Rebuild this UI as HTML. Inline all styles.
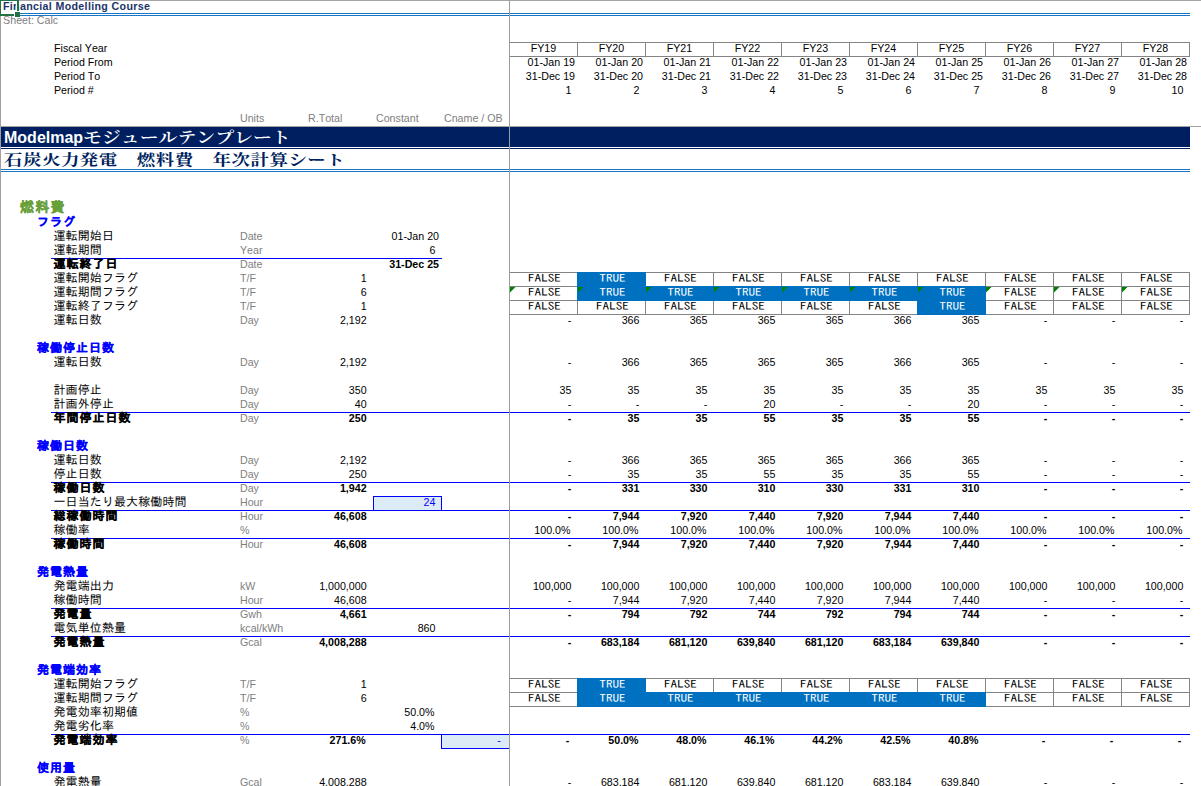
<!DOCTYPE html>
<html lang="ja">
<head>
<meta charset="utf-8">
<title>Calc</title>
<style>
html,body{margin:0;padding:0;background:#fff;}
#s{position:relative;width:1201px;height:786px;overflow:hidden;background:#fff;font-family:"Liberation Sans","IPAGothic","Noto Sans CJK JP",sans-serif;font-size:10.67px;line-height:12px;color:#000;}
#s div{position:absolute;}
.t{white-space:nowrap;font-kerning:none;font-variant-ligatures:none;}
.b{font-weight:bold;}
.g{color:#808080;}
.j{font-family:"Liberation Sans","IPAGothic","Noto Sans CJK JP",sans-serif;font-size:12px;letter-spacing:0.1px;line-height:14px;}
.j.b{letter-spacing:1.0px;-webkit-text-stroke:0.12px #000;}
.hd{color:#0000ff;font-weight:bold;letter-spacing:1px;-webkit-text-stroke:0.15px #0000ff;}
.sec{color:#68a03a;-webkit-text-stroke:0.2px #68a03a;font-weight:bold;font-size:14px;letter-spacing:1.3px;line-height:16px;}
.tf{font-family:"IPAGothic","Noto Sans CJK JP",sans-serif;font-size:10.8px;letter-spacing:0px;text-align:center;line-height:14px;transform:scaleX(1.22);transform-origin:50% 50%;}
.big{font-size:16px;line-height:20px;}
.mj{font-family:"Liberation Serif","Noto Serif CJK SC","Noto Serif CJK JP",serif;font-weight:700;display:inline-block;transform:scaleX(1.18);transform-origin:0 50%;}
</style>
</head>
<body>
<div id="s">
<div style="left:0px;top:0px;width:1201px;height:1px;background:#a6a6a6;"></div>
<div style="left:0px;top:0px;width:1px;height:786px;background:#a0a0a0;"></div>
<div style="left:509px;top:0px;width:1px;height:786px;background:#9b9b9b;"></div>
<div style="left:20px;top:13px;width:1170px;height:1px;background:#1b75c5;"></div>
<div style="left:20px;top:15px;width:1170px;height:1px;background:#1b75c5;"></div>
<div style="left:1px;top:127px;width:1189px;height:20px;background:#001f60;"></div>
<div style="left:1px;top:148px;width:1189px;height:1px;background:#001f60;"></div>
<div style="left:1px;top:169px;width:1189px;height:1px;background:#1b75c5;"></div>
<div style="left:1px;top:171px;width:1189px;height:1px;background:#1b75c5;"></div>
<div class="t b" style="top:0px;left:2.9px;color:#203468;letter-spacing:0.34px;">Financial Modelling Course</div>
<div class="t g" style="top:14px;left:3.1px;">Sheet: Calc</div>
<div style="left:16px;top:1px;width:1px;height:10px;background:#fff;"></div>
<div style="left:0px;top:0px;width:19px;height:1px;background:#217346;"></div>
<div style="left:0px;top:0px;width:1px;height:16px;background:#217346;"></div>
<div style="left:17px;top:0px;width:2px;height:11px;background:#217346;"></div>
<div style="left:0px;top:14px;width:14px;height:2px;background:#217346;"></div>
<div style="left:15px;top:12px;width:5px;height:5px;background:#217346;"></div>
<div class="t " style="top:42px;left:54.0px;">Fiscal Year</div>
<div class="t " style="top:56px;left:54.0px;">Period From</div>
<div class="t " style="top:70px;left:54.0px;">Period To</div>
<div class="t " style="top:84px;left:54.0px;">Period #</div>
<div class="t g" style="top:112px;left:240.0px;">Units</div>
<div class="t g" style="top:112px;left:308.0px;">R.Total</div>
<div class="t g" style="top:112px;left:376.0px;">Constant</div>
<div class="t g" style="top:112px;left:444.0px;">Cname / OB</div>
<div style="left:509px;top:42px;width:681px;height:1px;background:#848484;"></div>
<div style="left:509px;top:56px;width:681px;height:1px;background:#848484;"></div>
<div style="left:577px;top:42px;width:1px;height:15px;background:#848484;"></div>
<div style="left:645px;top:42px;width:1px;height:15px;background:#848484;"></div>
<div style="left:713px;top:42px;width:1px;height:15px;background:#848484;"></div>
<div style="left:781px;top:42px;width:1px;height:15px;background:#848484;"></div>
<div style="left:849px;top:42px;width:1px;height:15px;background:#848484;"></div>
<div style="left:917px;top:42px;width:1px;height:15px;background:#848484;"></div>
<div style="left:985px;top:42px;width:1px;height:15px;background:#848484;"></div>
<div style="left:1053px;top:42px;width:1px;height:15px;background:#848484;"></div>
<div style="left:1121px;top:42px;width:1px;height:15px;background:#848484;"></div>
<div style="left:1189px;top:42px;width:1px;height:15px;background:#848484;"></div>
<div class="t " style="top:42px;left:510px;width:67px;text-align:center;">FY19</div>
<div class="t " style="top:56px;right:626.0px;text-align:right;">01-Jan 19</div>
<div class="t " style="top:70px;right:626.0px;text-align:right;">31-Dec 19</div>
<div class="t " style="top:84px;right:629.6px;text-align:right;">1</div>
<div class="t " style="top:42px;left:578px;width:67px;text-align:center;">FY20</div>
<div class="t " style="top:56px;right:558.0px;text-align:right;">01-Jan 20</div>
<div class="t " style="top:70px;right:558.0px;text-align:right;">31-Dec 20</div>
<div class="t " style="top:84px;right:561.6px;text-align:right;">2</div>
<div class="t " style="top:42px;left:646px;width:67px;text-align:center;">FY21</div>
<div class="t " style="top:56px;right:490.0px;text-align:right;">01-Jan 21</div>
<div class="t " style="top:70px;right:490.0px;text-align:right;">31-Dec 21</div>
<div class="t " style="top:84px;right:493.6px;text-align:right;">3</div>
<div class="t " style="top:42px;left:714px;width:67px;text-align:center;">FY22</div>
<div class="t " style="top:56px;right:422.0px;text-align:right;">01-Jan 22</div>
<div class="t " style="top:70px;right:422.0px;text-align:right;">31-Dec 22</div>
<div class="t " style="top:84px;right:425.6px;text-align:right;">4</div>
<div class="t " style="top:42px;left:782px;width:67px;text-align:center;">FY23</div>
<div class="t " style="top:56px;right:354.0px;text-align:right;">01-Jan 23</div>
<div class="t " style="top:70px;right:354.0px;text-align:right;">31-Dec 23</div>
<div class="t " style="top:84px;right:357.6px;text-align:right;">5</div>
<div class="t " style="top:42px;left:850px;width:67px;text-align:center;">FY24</div>
<div class="t " style="top:56px;right:286.0px;text-align:right;">01-Jan 24</div>
<div class="t " style="top:70px;right:286.0px;text-align:right;">31-Dec 24</div>
<div class="t " style="top:84px;right:289.6px;text-align:right;">6</div>
<div class="t " style="top:42px;left:918px;width:67px;text-align:center;">FY25</div>
<div class="t " style="top:56px;right:218.0px;text-align:right;">01-Jan 25</div>
<div class="t " style="top:70px;right:218.0px;text-align:right;">31-Dec 25</div>
<div class="t " style="top:84px;right:221.6px;text-align:right;">7</div>
<div class="t " style="top:42px;left:986px;width:67px;text-align:center;">FY26</div>
<div class="t " style="top:56px;right:150.0px;text-align:right;">01-Jan 26</div>
<div class="t " style="top:70px;right:150.0px;text-align:right;">31-Dec 26</div>
<div class="t " style="top:84px;right:153.6px;text-align:right;">8</div>
<div class="t " style="top:42px;left:1054px;width:67px;text-align:center;">FY27</div>
<div class="t " style="top:56px;right:82.0px;text-align:right;">01-Jan 27</div>
<div class="t " style="top:70px;right:82.0px;text-align:right;">31-Dec 27</div>
<div class="t " style="top:84px;right:85.6px;text-align:right;">9</div>
<div class="t " style="top:42px;left:1122px;width:67px;text-align:center;">FY28</div>
<div class="t " style="top:56px;right:14.0px;text-align:right;">01-Jan 28</div>
<div class="t " style="top:70px;right:14.0px;text-align:right;">31-Dec 28</div>
<div class="t " style="top:84px;right:17.6px;text-align:right;">10</div>
<div class="t big" style="left:4px;top:128px;color:#fff;"><b>Modelmap</b><span class="mj" style="font-weight:600">モジュールテンプレート</span></div>
<div class="t big" style="left:4px;top:150px;color:#001f60;"><span class="mj" style="font-size:14.3px;letter-spacing:0.4px;transform:scaleX(1.29)">石炭火力発電　燃料費　年次計算シート</span></div>
<div class="t j sec" style="left:20px;top:199px;">燃料費</div>
<div class="t j hd" style="left:37px;top:215px;">フラグ</div>
<div class="t j" style="left:53.5px;top:229px;">運転開始日</div>
<div class="t g" style="top:230px;left:240.0px;">Date</div>
<div class="t " style="top:230px;right:762.0px;text-align:right;">01-Jan 20</div>
<div class="t j" style="left:53.5px;top:243px;">運転期間</div>
<div class="t g" style="top:244px;left:240.0px;">Year</div>
<div class="t " style="top:244px;right:765.6px;text-align:right;">6</div>
<div style="left:51px;top:258px;width:391px;height:1px;background:#0000ff;"></div>
<div class="t j b" style="left:53.5px;top:257px;">運転終了日</div>
<div class="t g" style="top:258px;left:240.0px;">Date</div>
<div class="t  b" style="top:258px;right:762.0px;text-align:right;">31-Dec 25</div>
<div class="t j" style="left:53.5px;top:271px;">運転開始フラグ</div>
<div class="t g" style="top:272px;left:240.0px;">T/F</div>
<div class="t " style="top:272px;right:834.4px;text-align:right;">1</div>
<div class="t j" style="left:53.5px;top:285px;">運転期間フラグ</div>
<div class="t g" style="top:286px;left:240.0px;">T/F</div>
<div class="t " style="top:286px;right:834.4px;text-align:right;">6</div>
<div class="t j" style="left:53.5px;top:299px;">運転終了フラグ</div>
<div class="t g" style="top:300px;left:240.0px;">T/F</div>
<div class="t " style="top:300px;right:834.4px;text-align:right;">1</div>
<div style="left:509px;top:272px;width:681px;height:1px;background:#848484;"></div>
<div style="left:509px;top:286px;width:681px;height:1px;background:#848484;"></div>
<div style="left:509px;top:300px;width:681px;height:1px;background:#848484;"></div>
<div style="left:509px;top:314px;width:681px;height:1px;background:#848484;"></div>
<div style="left:577px;top:272px;width:1px;height:43px;background:#848484;"></div>
<div style="left:645px;top:272px;width:1px;height:43px;background:#848484;"></div>
<div style="left:713px;top:272px;width:1px;height:43px;background:#848484;"></div>
<div style="left:781px;top:272px;width:1px;height:43px;background:#848484;"></div>
<div style="left:849px;top:272px;width:1px;height:43px;background:#848484;"></div>
<div style="left:917px;top:272px;width:1px;height:43px;background:#848484;"></div>
<div style="left:985px;top:272px;width:1px;height:43px;background:#848484;"></div>
<div style="left:1053px;top:272px;width:1px;height:43px;background:#848484;"></div>
<div style="left:1121px;top:272px;width:1px;height:43px;background:#848484;"></div>
<div style="left:1189px;top:272px;width:1px;height:43px;background:#848484;"></div>
<div style="left:577px;top:272px;width:69px;height:15px;background:#0070c0;"></div>
<div style="left:577px;top:286px;width:69px;height:15px;background:#0070c0;"></div>
<div style="left:645px;top:286px;width:69px;height:15px;background:#0070c0;"></div>
<div style="left:713px;top:286px;width:69px;height:15px;background:#0070c0;"></div>
<div style="left:781px;top:286px;width:69px;height:15px;background:#0070c0;"></div>
<div style="left:849px;top:286px;width:69px;height:15px;background:#0070c0;"></div>
<div style="left:917px;top:286px;width:69px;height:15px;background:#0070c0;"></div>
<div style="left:917px;top:300px;width:69px;height:15px;background:#0070c0;"></div>
<div class="t tf" style="left:511px;top:271px;width:67px;color:#000">FALSE</div>
<div class="t tf" style="left:579px;top:271px;width:67px;color:#fff">TRUE</div>
<div class="t tf" style="left:647px;top:271px;width:67px;color:#000">FALSE</div>
<div class="t tf" style="left:715px;top:271px;width:67px;color:#000">FALSE</div>
<div class="t tf" style="left:783px;top:271px;width:67px;color:#000">FALSE</div>
<div class="t tf" style="left:851px;top:271px;width:67px;color:#000">FALSE</div>
<div class="t tf" style="left:919px;top:271px;width:67px;color:#000">FALSE</div>
<div class="t tf" style="left:987px;top:271px;width:67px;color:#000">FALSE</div>
<div class="t tf" style="left:1055px;top:271px;width:67px;color:#000">FALSE</div>
<div class="t tf" style="left:1123px;top:271px;width:67px;color:#000">FALSE</div>
<div class="t tf" style="left:511px;top:285px;width:67px;color:#000">FALSE</div>
<svg style="position:absolute;left:510px;top:287px" width="6" height="6"><polygon points="0,0 5.5,0 0,5.5" fill="#008000"/></svg>
<div class="t tf" style="left:579px;top:285px;width:67px;color:#fff">TRUE</div>
<svg style="position:absolute;left:578px;top:287px" width="6" height="6"><polygon points="0,0 5.5,0 0,5.5" fill="#008000"/></svg>
<div class="t tf" style="left:647px;top:285px;width:67px;color:#fff">TRUE</div>
<svg style="position:absolute;left:646px;top:287px" width="6" height="6"><polygon points="0,0 5.5,0 0,5.5" fill="#008000"/></svg>
<div class="t tf" style="left:715px;top:285px;width:67px;color:#fff">TRUE</div>
<svg style="position:absolute;left:714px;top:287px" width="6" height="6"><polygon points="0,0 5.5,0 0,5.5" fill="#008000"/></svg>
<div class="t tf" style="left:783px;top:285px;width:67px;color:#fff">TRUE</div>
<svg style="position:absolute;left:782px;top:287px" width="6" height="6"><polygon points="0,0 5.5,0 0,5.5" fill="#008000"/></svg>
<div class="t tf" style="left:851px;top:285px;width:67px;color:#fff">TRUE</div>
<svg style="position:absolute;left:850px;top:287px" width="6" height="6"><polygon points="0,0 5.5,0 0,5.5" fill="#008000"/></svg>
<div class="t tf" style="left:919px;top:285px;width:67px;color:#fff">TRUE</div>
<svg style="position:absolute;left:918px;top:287px" width="6" height="6"><polygon points="0,0 5.5,0 0,5.5" fill="#008000"/></svg>
<div class="t tf" style="left:987px;top:285px;width:67px;color:#000">FALSE</div>
<svg style="position:absolute;left:986px;top:287px" width="6" height="6"><polygon points="0,0 5.5,0 0,5.5" fill="#008000"/></svg>
<div class="t tf" style="left:1055px;top:285px;width:67px;color:#000">FALSE</div>
<svg style="position:absolute;left:1054px;top:287px" width="6" height="6"><polygon points="0,0 5.5,0 0,5.5" fill="#008000"/></svg>
<div class="t tf" style="left:1123px;top:285px;width:67px;color:#000">FALSE</div>
<svg style="position:absolute;left:1122px;top:287px" width="6" height="6"><polygon points="0,0 5.5,0 0,5.5" fill="#008000"/></svg>
<div class="t tf" style="left:511px;top:299px;width:67px;color:#000">FALSE</div>
<div class="t tf" style="left:579px;top:299px;width:67px;color:#000">FALSE</div>
<div class="t tf" style="left:647px;top:299px;width:67px;color:#000">FALSE</div>
<div class="t tf" style="left:715px;top:299px;width:67px;color:#000">FALSE</div>
<div class="t tf" style="left:783px;top:299px;width:67px;color:#000">FALSE</div>
<div class="t tf" style="left:851px;top:299px;width:67px;color:#000">FALSE</div>
<div class="t tf" style="left:919px;top:299px;width:67px;color:#fff">TRUE</div>
<div class="t tf" style="left:987px;top:299px;width:67px;color:#000">FALSE</div>
<div class="t tf" style="left:1055px;top:299px;width:67px;color:#000">FALSE</div>
<div class="t tf" style="left:1123px;top:299px;width:67px;color:#000">FALSE</div>
<div class="t j" style="left:53.5px;top:313px;">運転日数</div>
<div class="t g" style="top:314px;left:240.0px;">Day</div>
<div class="t " style="top:314px;right:834.4px;text-align:right;">2,192</div>
<div class="t " style="top:314px;right:629.6px;text-align:right;">-</div>
<div class="t " style="top:314px;right:561.6px;text-align:right;">366</div>
<div class="t " style="top:314px;right:493.6px;text-align:right;">365</div>
<div class="t " style="top:314px;right:425.6px;text-align:right;">365</div>
<div class="t " style="top:314px;right:357.6px;text-align:right;">365</div>
<div class="t " style="top:314px;right:289.6px;text-align:right;">366</div>
<div class="t " style="top:314px;right:221.6px;text-align:right;">365</div>
<div class="t " style="top:314px;right:153.6px;text-align:right;">-</div>
<div class="t " style="top:314px;right:85.6px;text-align:right;">-</div>
<div class="t " style="top:314px;right:17.6px;text-align:right;">-</div>
<div class="t j hd" style="left:37px;top:341px;">稼働停止日数</div>
<div class="t j" style="left:53.5px;top:355px;">運転日数</div>
<div class="t g" style="top:356px;left:240.0px;">Day</div>
<div class="t " style="top:356px;right:834.4px;text-align:right;">2,192</div>
<div class="t " style="top:356px;right:629.6px;text-align:right;">-</div>
<div class="t " style="top:356px;right:561.6px;text-align:right;">366</div>
<div class="t " style="top:356px;right:493.6px;text-align:right;">365</div>
<div class="t " style="top:356px;right:425.6px;text-align:right;">365</div>
<div class="t " style="top:356px;right:357.6px;text-align:right;">365</div>
<div class="t " style="top:356px;right:289.6px;text-align:right;">366</div>
<div class="t " style="top:356px;right:221.6px;text-align:right;">365</div>
<div class="t " style="top:356px;right:153.6px;text-align:right;">-</div>
<div class="t " style="top:356px;right:85.6px;text-align:right;">-</div>
<div class="t " style="top:356px;right:17.6px;text-align:right;">-</div>
<div class="t j" style="left:53.5px;top:383px;">計画停止</div>
<div class="t g" style="top:384px;left:240.0px;">Day</div>
<div class="t " style="top:384px;right:834.4px;text-align:right;">350</div>
<div class="t " style="top:384px;right:629.6px;text-align:right;">35</div>
<div class="t " style="top:384px;right:561.6px;text-align:right;">35</div>
<div class="t " style="top:384px;right:493.6px;text-align:right;">35</div>
<div class="t " style="top:384px;right:425.6px;text-align:right;">35</div>
<div class="t " style="top:384px;right:357.6px;text-align:right;">35</div>
<div class="t " style="top:384px;right:289.6px;text-align:right;">35</div>
<div class="t " style="top:384px;right:221.6px;text-align:right;">35</div>
<div class="t " style="top:384px;right:153.6px;text-align:right;">35</div>
<div class="t " style="top:384px;right:85.6px;text-align:right;">35</div>
<div class="t " style="top:384px;right:17.6px;text-align:right;">35</div>
<div class="t j" style="left:53.5px;top:397px;">計画外停止</div>
<div class="t g" style="top:398px;left:240.0px;">Day</div>
<div class="t " style="top:398px;right:834.4px;text-align:right;">40</div>
<div class="t " style="top:398px;right:629.6px;text-align:right;">-</div>
<div class="t " style="top:398px;right:561.6px;text-align:right;">-</div>
<div class="t " style="top:398px;right:493.6px;text-align:right;">-</div>
<div class="t " style="top:398px;right:425.6px;text-align:right;">20</div>
<div class="t " style="top:398px;right:357.6px;text-align:right;">-</div>
<div class="t " style="top:398px;right:289.6px;text-align:right;">-</div>
<div class="t " style="top:398px;right:221.6px;text-align:right;">20</div>
<div class="t " style="top:398px;right:153.6px;text-align:right;">-</div>
<div class="t " style="top:398px;right:85.6px;text-align:right;">-</div>
<div class="t " style="top:398px;right:17.6px;text-align:right;">-</div>
<div style="left:51px;top:412px;width:1139px;height:1px;background:#0000ff;"></div>
<div class="t j b" style="left:53.5px;top:411px;">年間停止日数</div>
<div class="t g" style="top:412px;left:240.0px;">Day</div>
<div class="t  b" style="top:412px;right:834.4px;text-align:right;">250</div>
<div class="t  b" style="top:412px;right:629.6px;text-align:right;">-</div>
<div class="t  b" style="top:412px;right:561.6px;text-align:right;">35</div>
<div class="t  b" style="top:412px;right:493.6px;text-align:right;">35</div>
<div class="t  b" style="top:412px;right:425.6px;text-align:right;">55</div>
<div class="t  b" style="top:412px;right:357.6px;text-align:right;">35</div>
<div class="t  b" style="top:412px;right:289.6px;text-align:right;">35</div>
<div class="t  b" style="top:412px;right:221.6px;text-align:right;">55</div>
<div class="t  b" style="top:412px;right:153.6px;text-align:right;">-</div>
<div class="t  b" style="top:412px;right:85.6px;text-align:right;">-</div>
<div class="t  b" style="top:412px;right:17.6px;text-align:right;">-</div>
<div class="t j hd" style="left:37px;top:439px;">稼働日数</div>
<div class="t j" style="left:53.5px;top:453px;">運転日数</div>
<div class="t g" style="top:454px;left:240.0px;">Day</div>
<div class="t " style="top:454px;right:834.4px;text-align:right;">2,192</div>
<div class="t " style="top:454px;right:629.6px;text-align:right;">-</div>
<div class="t " style="top:454px;right:561.6px;text-align:right;">366</div>
<div class="t " style="top:454px;right:493.6px;text-align:right;">365</div>
<div class="t " style="top:454px;right:425.6px;text-align:right;">365</div>
<div class="t " style="top:454px;right:357.6px;text-align:right;">365</div>
<div class="t " style="top:454px;right:289.6px;text-align:right;">366</div>
<div class="t " style="top:454px;right:221.6px;text-align:right;">365</div>
<div class="t " style="top:454px;right:153.6px;text-align:right;">-</div>
<div class="t " style="top:454px;right:85.6px;text-align:right;">-</div>
<div class="t " style="top:454px;right:17.6px;text-align:right;">-</div>
<div class="t j" style="left:53.5px;top:467px;">停止日数</div>
<div class="t g" style="top:468px;left:240.0px;">Day</div>
<div class="t " style="top:468px;right:834.4px;text-align:right;">250</div>
<div class="t " style="top:468px;right:629.6px;text-align:right;">-</div>
<div class="t " style="top:468px;right:561.6px;text-align:right;">35</div>
<div class="t " style="top:468px;right:493.6px;text-align:right;">35</div>
<div class="t " style="top:468px;right:425.6px;text-align:right;">55</div>
<div class="t " style="top:468px;right:357.6px;text-align:right;">35</div>
<div class="t " style="top:468px;right:289.6px;text-align:right;">35</div>
<div class="t " style="top:468px;right:221.6px;text-align:right;">55</div>
<div class="t " style="top:468px;right:153.6px;text-align:right;">-</div>
<div class="t " style="top:468px;right:85.6px;text-align:right;">-</div>
<div class="t " style="top:468px;right:17.6px;text-align:right;">-</div>
<div style="left:51px;top:482px;width:1139px;height:1px;background:#0000ff;"></div>
<div class="t j b" style="left:53.5px;top:481px;">稼働日数</div>
<div class="t g" style="top:482px;left:240.0px;">Day</div>
<div class="t  b" style="top:482px;right:834.4px;text-align:right;">1,942</div>
<div class="t  b" style="top:482px;right:629.6px;text-align:right;">-</div>
<div class="t  b" style="top:482px;right:561.6px;text-align:right;">331</div>
<div class="t  b" style="top:482px;right:493.6px;text-align:right;">330</div>
<div class="t  b" style="top:482px;right:425.6px;text-align:right;">310</div>
<div class="t  b" style="top:482px;right:357.6px;text-align:right;">330</div>
<div class="t  b" style="top:482px;right:289.6px;text-align:right;">331</div>
<div class="t  b" style="top:482px;right:221.6px;text-align:right;">310</div>
<div class="t  b" style="top:482px;right:153.6px;text-align:right;">-</div>
<div class="t  b" style="top:482px;right:85.6px;text-align:right;">-</div>
<div class="t  b" style="top:482px;right:17.6px;text-align:right;">-</div>
<div style="left:373px;top:496px;width:69px;height:15px;background:#0000ff;"></div>
<div style="left:374px;top:497px;width:67px;height:13px;background:#ddebf7;"></div>
<div class="t j" style="left:53.5px;top:495px;">一日当たり最大稼働時間</div>
<div class="t g" style="top:496px;left:240.0px;">Hour</div>
<div class="t " style="top:496px;right:765.6px;text-align:right;color:#0000ff;">24</div>
<div style="left:51px;top:510px;width:1139px;height:1px;background:#0000ff;"></div>
<div class="t j b" style="left:53.5px;top:509px;">総稼働時間</div>
<div class="t g" style="top:510px;left:240.0px;">Hour</div>
<div class="t  b" style="top:510px;right:834.4px;text-align:right;">46,608</div>
<div class="t  b" style="top:510px;right:629.6px;text-align:right;">-</div>
<div class="t  b" style="top:510px;right:561.6px;text-align:right;">7,944</div>
<div class="t  b" style="top:510px;right:493.6px;text-align:right;">7,920</div>
<div class="t  b" style="top:510px;right:425.6px;text-align:right;">7,440</div>
<div class="t  b" style="top:510px;right:357.6px;text-align:right;">7,920</div>
<div class="t  b" style="top:510px;right:289.6px;text-align:right;">7,944</div>
<div class="t  b" style="top:510px;right:221.6px;text-align:right;">7,440</div>
<div class="t  b" style="top:510px;right:153.6px;text-align:right;">-</div>
<div class="t  b" style="top:510px;right:85.6px;text-align:right;">-</div>
<div class="t  b" style="top:510px;right:17.6px;text-align:right;">-</div>
<div class="t j" style="left:53.5px;top:523px;">稼働率</div>
<div class="t g" style="top:524px;left:240.0px;">%</div>
<div class="t " style="top:524px;right:630.5px;text-align:right;">100.0%</div>
<div class="t " style="top:524px;right:562.5px;text-align:right;">100.0%</div>
<div class="t " style="top:524px;right:494.5px;text-align:right;">100.0%</div>
<div class="t " style="top:524px;right:426.5px;text-align:right;">100.0%</div>
<div class="t " style="top:524px;right:358.5px;text-align:right;">100.0%</div>
<div class="t " style="top:524px;right:290.5px;text-align:right;">100.0%</div>
<div class="t " style="top:524px;right:222.5px;text-align:right;">100.0%</div>
<div class="t " style="top:524px;right:154.5px;text-align:right;">100.0%</div>
<div class="t " style="top:524px;right:86.5px;text-align:right;">100.0%</div>
<div class="t " style="top:524px;right:18.5px;text-align:right;">100.0%</div>
<div style="left:51px;top:538px;width:1139px;height:1px;background:#0000ff;"></div>
<div class="t j b" style="left:53.5px;top:537px;">稼働時間</div>
<div class="t g" style="top:538px;left:240.0px;">Hour</div>
<div class="t  b" style="top:538px;right:834.4px;text-align:right;">46,608</div>
<div class="t  b" style="top:538px;right:629.6px;text-align:right;">-</div>
<div class="t  b" style="top:538px;right:561.6px;text-align:right;">7,944</div>
<div class="t  b" style="top:538px;right:493.6px;text-align:right;">7,920</div>
<div class="t  b" style="top:538px;right:425.6px;text-align:right;">7,440</div>
<div class="t  b" style="top:538px;right:357.6px;text-align:right;">7,920</div>
<div class="t  b" style="top:538px;right:289.6px;text-align:right;">7,944</div>
<div class="t  b" style="top:538px;right:221.6px;text-align:right;">7,440</div>
<div class="t  b" style="top:538px;right:153.6px;text-align:right;">-</div>
<div class="t  b" style="top:538px;right:85.6px;text-align:right;">-</div>
<div class="t  b" style="top:538px;right:17.6px;text-align:right;">-</div>
<div class="t j hd" style="left:37px;top:565px;">発電熱量</div>
<div class="t j" style="left:53.5px;top:579px;">発電端出力</div>
<div class="t g" style="top:580px;left:240.0px;">kW</div>
<div class="t " style="top:580px;right:834.4px;text-align:right;">1,000,000</div>
<div class="t " style="top:580px;right:629.6px;text-align:right;">100,000</div>
<div class="t " style="top:580px;right:561.6px;text-align:right;">100,000</div>
<div class="t " style="top:580px;right:493.6px;text-align:right;">100,000</div>
<div class="t " style="top:580px;right:425.6px;text-align:right;">100,000</div>
<div class="t " style="top:580px;right:357.6px;text-align:right;">100,000</div>
<div class="t " style="top:580px;right:289.6px;text-align:right;">100,000</div>
<div class="t " style="top:580px;right:221.6px;text-align:right;">100,000</div>
<div class="t " style="top:580px;right:153.6px;text-align:right;">100,000</div>
<div class="t " style="top:580px;right:85.6px;text-align:right;">100,000</div>
<div class="t " style="top:580px;right:17.6px;text-align:right;">100,000</div>
<div class="t j" style="left:53.5px;top:593px;">稼働時間</div>
<div class="t g" style="top:594px;left:240.0px;">Hour</div>
<div class="t " style="top:594px;right:834.4px;text-align:right;">46,608</div>
<div class="t " style="top:594px;right:629.6px;text-align:right;">-</div>
<div class="t " style="top:594px;right:561.6px;text-align:right;">7,944</div>
<div class="t " style="top:594px;right:493.6px;text-align:right;">7,920</div>
<div class="t " style="top:594px;right:425.6px;text-align:right;">7,440</div>
<div class="t " style="top:594px;right:357.6px;text-align:right;">7,920</div>
<div class="t " style="top:594px;right:289.6px;text-align:right;">7,944</div>
<div class="t " style="top:594px;right:221.6px;text-align:right;">7,440</div>
<div class="t " style="top:594px;right:153.6px;text-align:right;">-</div>
<div class="t " style="top:594px;right:85.6px;text-align:right;">-</div>
<div class="t " style="top:594px;right:17.6px;text-align:right;">-</div>
<div style="left:51px;top:608px;width:1139px;height:1px;background:#0000ff;"></div>
<div class="t j b" style="left:53.5px;top:607px;">発電量</div>
<div class="t g" style="top:608px;left:240.0px;">Gwh</div>
<div class="t  b" style="top:608px;right:834.4px;text-align:right;">4,661</div>
<div class="t  b" style="top:608px;right:629.6px;text-align:right;">-</div>
<div class="t  b" style="top:608px;right:561.6px;text-align:right;">794</div>
<div class="t  b" style="top:608px;right:493.6px;text-align:right;">792</div>
<div class="t  b" style="top:608px;right:425.6px;text-align:right;">744</div>
<div class="t  b" style="top:608px;right:357.6px;text-align:right;">792</div>
<div class="t  b" style="top:608px;right:289.6px;text-align:right;">794</div>
<div class="t  b" style="top:608px;right:221.6px;text-align:right;">744</div>
<div class="t  b" style="top:608px;right:153.6px;text-align:right;">-</div>
<div class="t  b" style="top:608px;right:85.6px;text-align:right;">-</div>
<div class="t  b" style="top:608px;right:17.6px;text-align:right;">-</div>
<div class="t j" style="left:53.5px;top:621px;">電気単位熱量</div>
<div class="t g" style="top:622px;left:240.0px;">kcal/kWh</div>
<div class="t " style="top:622px;right:765.6px;text-align:right;">860</div>
<div style="left:51px;top:636px;width:1139px;height:1px;background:#0000ff;"></div>
<div class="t j b" style="left:53.5px;top:635px;">発電熱量</div>
<div class="t g" style="top:636px;left:240.0px;">Gcal</div>
<div class="t  b" style="top:636px;right:834.4px;text-align:right;">4,008,288</div>
<div class="t  b" style="top:636px;right:629.6px;text-align:right;">-</div>
<div class="t  b" style="top:636px;right:561.6px;text-align:right;">683,184</div>
<div class="t  b" style="top:636px;right:493.6px;text-align:right;">681,120</div>
<div class="t  b" style="top:636px;right:425.6px;text-align:right;">639,840</div>
<div class="t  b" style="top:636px;right:357.6px;text-align:right;">681,120</div>
<div class="t  b" style="top:636px;right:289.6px;text-align:right;">683,184</div>
<div class="t  b" style="top:636px;right:221.6px;text-align:right;">639,840</div>
<div class="t  b" style="top:636px;right:153.6px;text-align:right;">-</div>
<div class="t  b" style="top:636px;right:85.6px;text-align:right;">-</div>
<div class="t  b" style="top:636px;right:17.6px;text-align:right;">-</div>
<div class="t j hd" style="left:37px;top:663px;">発電端効率</div>
<div class="t j" style="left:53.5px;top:677px;">運転開始フラグ</div>
<div class="t g" style="top:678px;left:240.0px;">T/F</div>
<div class="t " style="top:678px;right:834.4px;text-align:right;">1</div>
<div class="t j" style="left:53.5px;top:691px;">運転期間フラグ</div>
<div class="t g" style="top:692px;left:240.0px;">T/F</div>
<div class="t " style="top:692px;right:834.4px;text-align:right;">6</div>
<div style="left:509px;top:678px;width:681px;height:1px;background:#848484;"></div>
<div style="left:509px;top:692px;width:681px;height:1px;background:#848484;"></div>
<div style="left:509px;top:706px;width:681px;height:1px;background:#848484;"></div>
<div style="left:577px;top:678px;width:1px;height:29px;background:#848484;"></div>
<div style="left:645px;top:678px;width:1px;height:29px;background:#848484;"></div>
<div style="left:713px;top:678px;width:1px;height:29px;background:#848484;"></div>
<div style="left:781px;top:678px;width:1px;height:29px;background:#848484;"></div>
<div style="left:849px;top:678px;width:1px;height:29px;background:#848484;"></div>
<div style="left:917px;top:678px;width:1px;height:29px;background:#848484;"></div>
<div style="left:985px;top:678px;width:1px;height:29px;background:#848484;"></div>
<div style="left:1053px;top:678px;width:1px;height:29px;background:#848484;"></div>
<div style="left:1121px;top:678px;width:1px;height:29px;background:#848484;"></div>
<div style="left:1189px;top:678px;width:1px;height:29px;background:#848484;"></div>
<div style="left:577px;top:678px;width:69px;height:15px;background:#0070c0;"></div>
<div style="left:577px;top:692px;width:69px;height:15px;background:#0070c0;"></div>
<div style="left:645px;top:692px;width:69px;height:15px;background:#0070c0;"></div>
<div style="left:713px;top:692px;width:69px;height:15px;background:#0070c0;"></div>
<div style="left:781px;top:692px;width:69px;height:15px;background:#0070c0;"></div>
<div style="left:849px;top:692px;width:69px;height:15px;background:#0070c0;"></div>
<div style="left:917px;top:692px;width:69px;height:15px;background:#0070c0;"></div>
<div class="t tf" style="left:511px;top:677px;width:67px;color:#000">FALSE</div>
<div class="t tf" style="left:579px;top:677px;width:67px;color:#fff">TRUE</div>
<div class="t tf" style="left:647px;top:677px;width:67px;color:#000">FALSE</div>
<div class="t tf" style="left:715px;top:677px;width:67px;color:#000">FALSE</div>
<div class="t tf" style="left:783px;top:677px;width:67px;color:#000">FALSE</div>
<div class="t tf" style="left:851px;top:677px;width:67px;color:#000">FALSE</div>
<div class="t tf" style="left:919px;top:677px;width:67px;color:#000">FALSE</div>
<div class="t tf" style="left:987px;top:677px;width:67px;color:#000">FALSE</div>
<div class="t tf" style="left:1055px;top:677px;width:67px;color:#000">FALSE</div>
<div class="t tf" style="left:1123px;top:677px;width:67px;color:#000">FALSE</div>
<div class="t tf" style="left:511px;top:691px;width:67px;color:#000">FALSE</div>
<div class="t tf" style="left:579px;top:691px;width:67px;color:#fff">TRUE</div>
<div class="t tf" style="left:647px;top:691px;width:67px;color:#fff">TRUE</div>
<div class="t tf" style="left:715px;top:691px;width:67px;color:#fff">TRUE</div>
<div class="t tf" style="left:783px;top:691px;width:67px;color:#fff">TRUE</div>
<div class="t tf" style="left:851px;top:691px;width:67px;color:#fff">TRUE</div>
<div class="t tf" style="left:919px;top:691px;width:67px;color:#fff">TRUE</div>
<div class="t tf" style="left:987px;top:691px;width:67px;color:#000">FALSE</div>
<div class="t tf" style="left:1055px;top:691px;width:67px;color:#000">FALSE</div>
<div class="t tf" style="left:1123px;top:691px;width:67px;color:#000">FALSE</div>
<div class="t j" style="left:53.5px;top:705px;">発電効率初期値</div>
<div class="t g" style="top:706px;left:240.0px;">%</div>
<div class="t " style="top:706px;right:766.5px;text-align:right;">50.0%</div>
<div class="t j" style="left:53.5px;top:719px;">発電劣化率</div>
<div class="t g" style="top:720px;left:240.0px;">%</div>
<div class="t " style="top:720px;right:766.5px;text-align:right;">4.0%</div>
<div style="left:441px;top:734px;width:69px;height:15px;background:#0000ff;"></div>
<div style="left:442px;top:735px;width:67px;height:13px;background:#ddebf7;"></div>
<div style="left:51px;top:734px;width:1139px;height:1px;background:#0000ff;"></div>
<div class="t j b" style="left:53.5px;top:733px;">発電端効率</div>
<div class="t g" style="top:734px;left:240.0px;">%</div>
<div class="t  b" style="top:734px;right:835.3px;text-align:right;">271.6%</div>
<div class="t  b" style="top:734px;right:631.6px;text-align:right;">-</div>
<div class="t  b" style="top:734px;right:562.5px;text-align:right;">50.0%</div>
<div class="t  b" style="top:734px;right:494.5px;text-align:right;">48.0%</div>
<div class="t  b" style="top:734px;right:426.5px;text-align:right;">46.1%</div>
<div class="t  b" style="top:734px;right:358.5px;text-align:right;">44.2%</div>
<div class="t  b" style="top:734px;right:290.5px;text-align:right;">42.5%</div>
<div class="t  b" style="top:734px;right:222.5px;text-align:right;">40.8%</div>
<div class="t  b" style="top:734px;right:155.6px;text-align:right;">-</div>
<div class="t  b" style="top:734px;right:87.6px;text-align:right;">-</div>
<div class="t  b" style="top:734px;right:19.6px;text-align:right;">-</div>
<div class="t " style="top:734px;right:700.1px;text-align:right;color:#0000ff;">-</div>
<div class="t j hd" style="left:37px;top:761px;">使用量</div>
<div class="t j" style="left:53.5px;top:775px;">発電熱量</div>
<div class="t g" style="top:776px;left:240.0px;">Gcal</div>
<div class="t " style="top:776px;right:834.4px;text-align:right;">4,008,288</div>
<div class="t " style="top:776px;right:629.6px;text-align:right;">-</div>
<div class="t " style="top:776px;right:561.6px;text-align:right;">683,184</div>
<div class="t " style="top:776px;right:493.6px;text-align:right;">681,120</div>
<div class="t " style="top:776px;right:425.6px;text-align:right;">639,840</div>
<div class="t " style="top:776px;right:357.6px;text-align:right;">681,120</div>
<div class="t " style="top:776px;right:289.6px;text-align:right;">683,184</div>
<div class="t " style="top:776px;right:221.6px;text-align:right;">639,840</div>
<div class="t " style="top:776px;right:153.6px;text-align:right;">-</div>
<div class="t " style="top:776px;right:85.6px;text-align:right;">-</div>
<div class="t " style="top:776px;right:17.6px;text-align:right;">-</div>
<div style="left:509px;top:0px;width:1px;height:786px;background:#9b9b9b;"></div>
<div style="left:0px;top:126px;width:1201px;height:1px;background:#a3a3a3;"></div>
</div>
</body>
</html>
